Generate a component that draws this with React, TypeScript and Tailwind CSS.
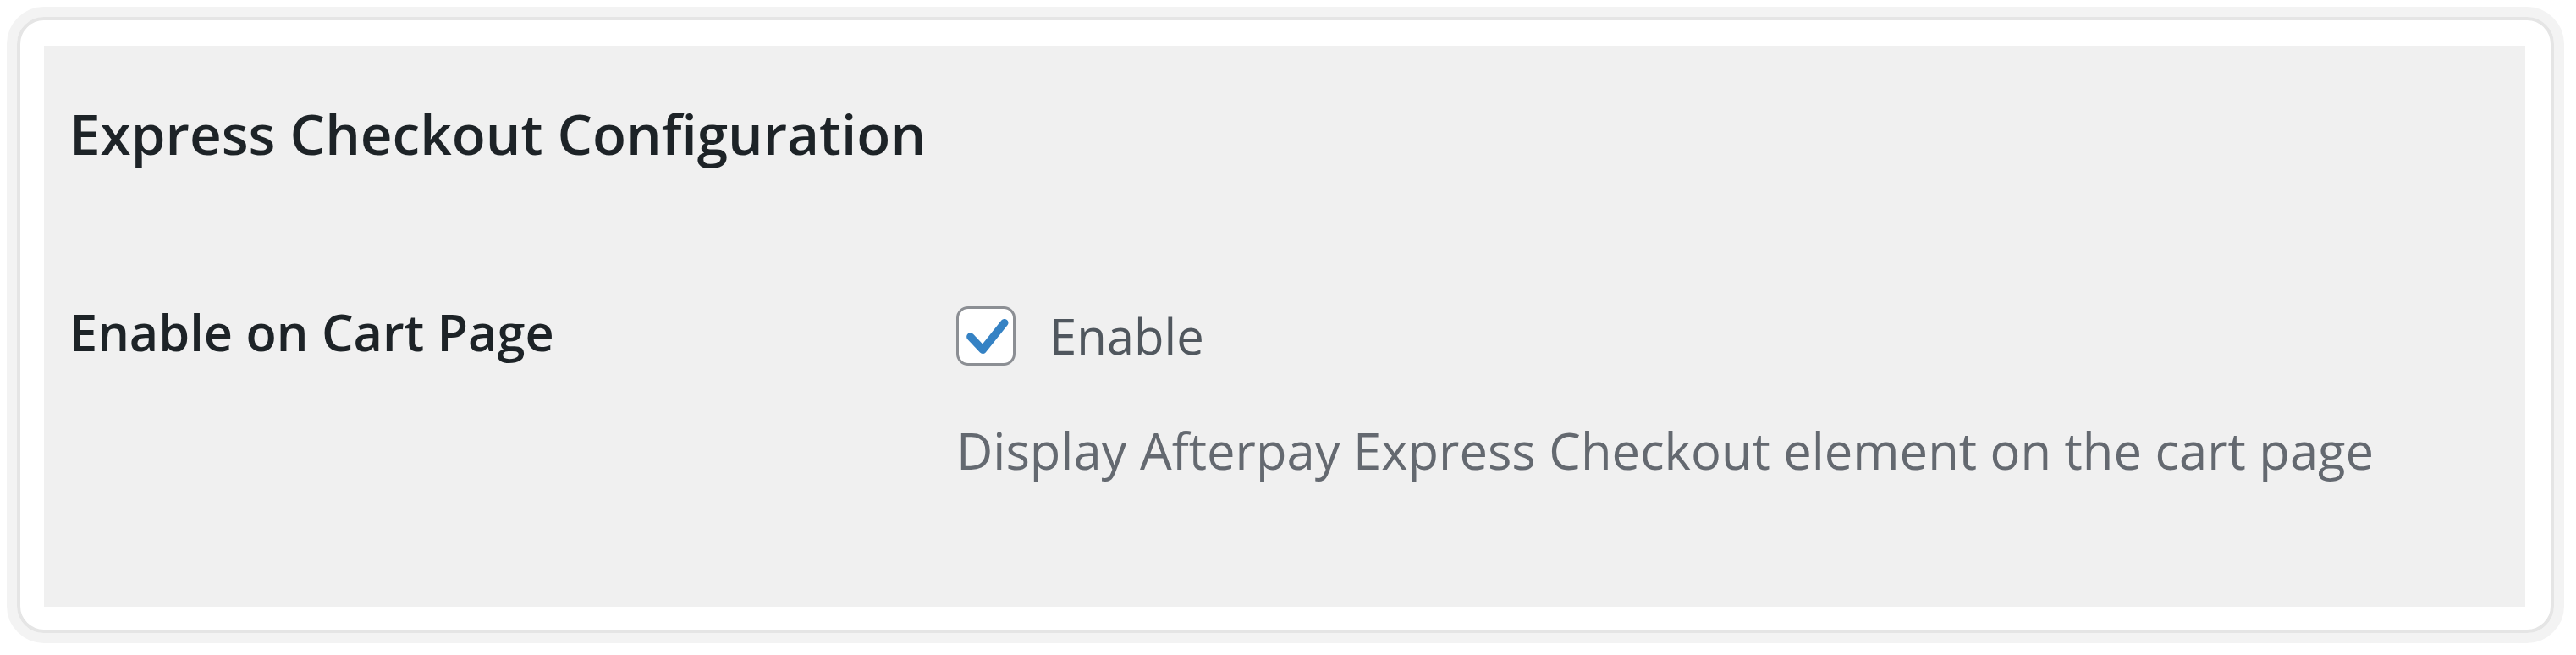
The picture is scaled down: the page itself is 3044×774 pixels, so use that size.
export default function App() {
  return (
    <div className="h-[774px] w-[3044px] bg-white pt-[8px] pl-[8px] pr-[14px] pb-[14px] font-['Open_Sans',sans-serif]">
      <div className="h-full rounded-[44px] border-[12px] border-[#f3f3f3]">
        <div className="h-full rounded-[32px] border-[4px] border-[#e5e5e5] bg-white pt-[30px] pb-[27px] pl-[28px] pr-[30px]">
          <div className="h-full bg-[#f0f0f0] pl-[30px] pt-[71px]">
            <h2 className="text-[65.6px] font-semibold leading-[65px] text-[#1d2327]">
              Express Checkout Configuration
            </h2>

            <div className="mt-[172px] flex">
              <div className="w-[1048px] text-[59.4px] font-semibold leading-[60px] text-[#1d2327]">
                Enable on Cart Page
              </div>
              <div>
                <label className="flex items-center gap-[40px] text-[58px] leading-[60px] text-[#50575e]">
                  <span className="flex h-[70px] w-[70px] items-center justify-center rounded-[14px] border-[3px] border-[#8c8f94] bg-white">
                    <svg viewBox="0 0 70 70" className="h-[70px] w-[70px]">
                      <path
                        d="M15 36 L31 53 L59 18"
                        fill="none"
                        stroke="#3582c4"
                        strokeWidth="10"
                        strokeLinecap="round"
                        strokeLinejoin="round"
                      />
                    </svg>
                  </span>
                  Enable
                </label>
                <p className="mt-[70px] text-[59.7px] leading-[60px] text-[#646970]">
                  Display Afterpay Express Checkout element on the cart page
                </p>
              </div>
            </div>
          </div>
        </div>
      </div>
    </div>
  )
}
